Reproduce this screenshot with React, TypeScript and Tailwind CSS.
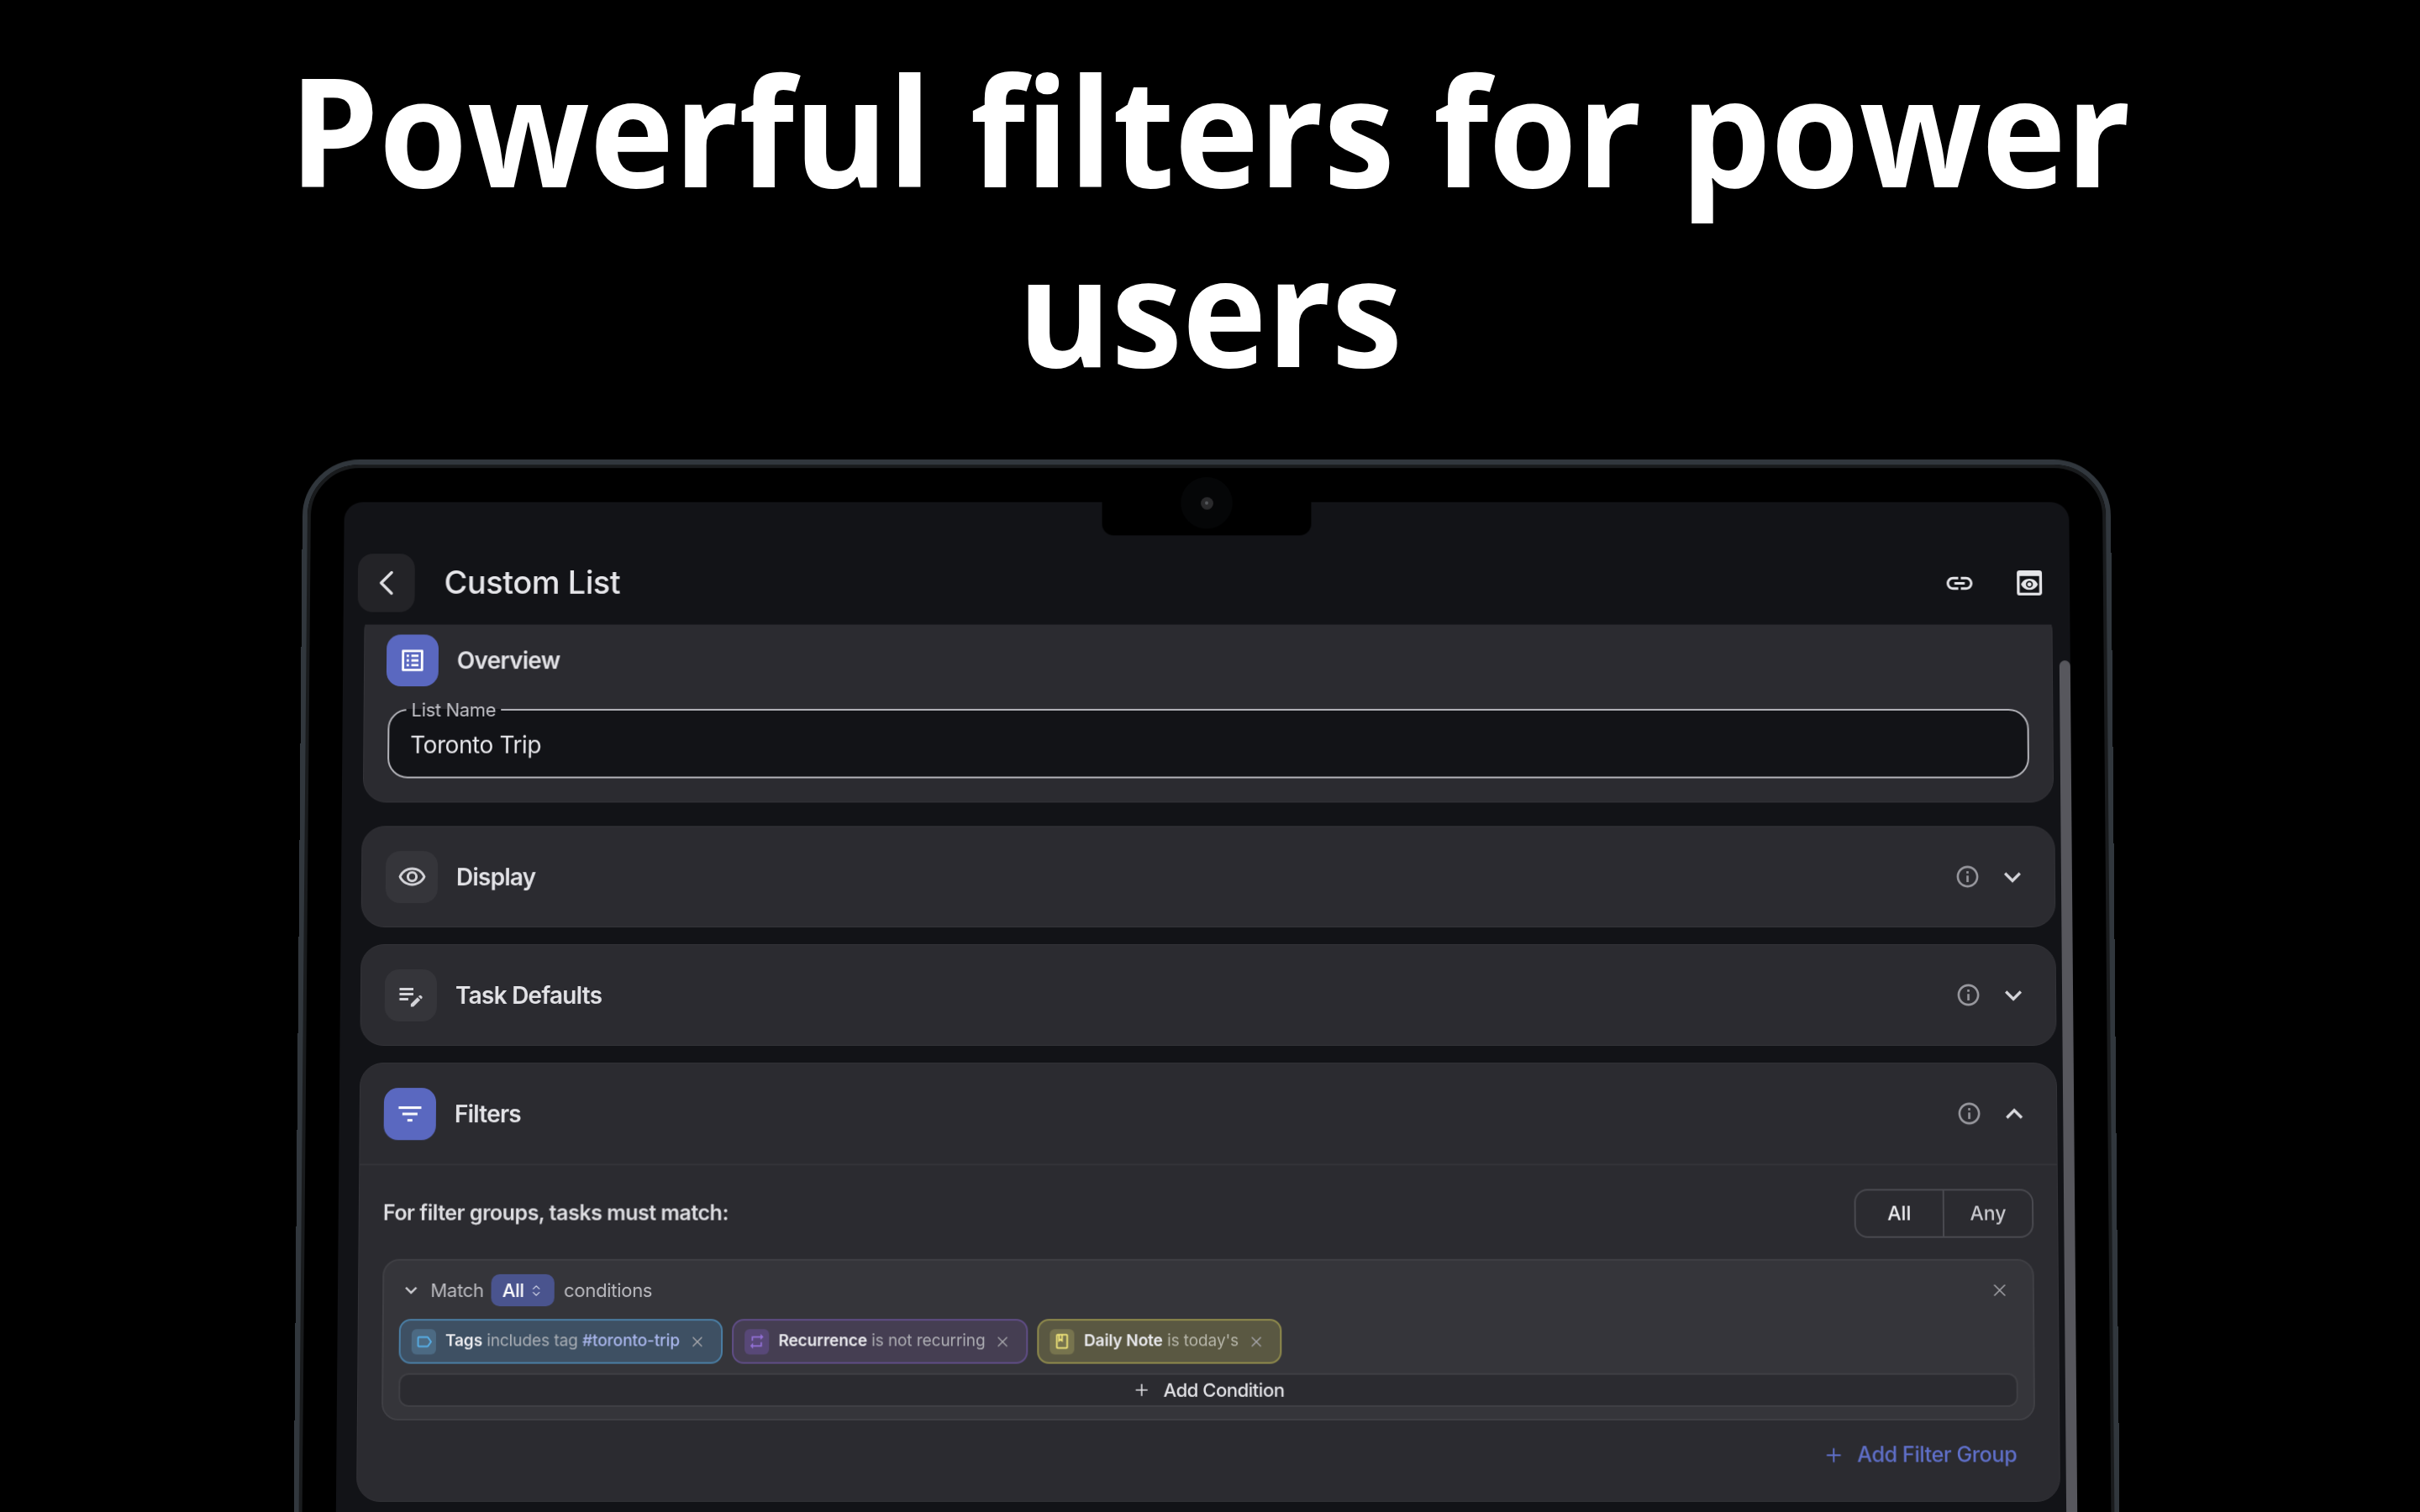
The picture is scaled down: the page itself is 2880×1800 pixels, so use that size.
import { ChevronLeft, ChevronsUpDown, Plus, X } from "lucide-react";
import {
  MdExpandLess,
  MdExpandMore,
  MdFilterList,
  MdLink,
  MdOutlineBook,
  MdOutlineEditNote,
  MdOutlineInfo,
  MdOutlineLabel,
  MdOutlineListAlt,
  MdOutlineRemoveRedEye,
  MdPreview,
  MdRepeat,
} from "react-icons/md";

function SectionHeader({
  icon,
  title,
  active,
  open,
}: {
  icon: React.ReactNode;
  title: string;
  active?: boolean;
  open?: boolean;
}) {
  return (
    <div className="flex h-[119px] items-center pl-[28px] pr-[30px]">
      <div
        className={
          active
            ? "flex h-[62px] w-[62px] items-center justify-center rounded-[17px] bg-[#5a68c0] text-white"
            : "flex h-[62px] w-[62px] items-center justify-center rounded-[17px] bg-[#35353a] text-[#d4d4d9]"
        }
      >
        {icon}
      </div>
      <span className="ml-[22px] text-[28px] font-semibold tracking-[-0.75px] text-[#e2e2e6]">{title}</span>
      <div className="ml-auto flex items-center gap-[18px]">
        <MdOutlineInfo size={31} className="text-[#98989e]" />
        {open ? (
          <MdExpandLess size={40} className="text-[#dcdce0]" />
        ) : (
          <MdExpandMore size={40} className="text-[#d4d4d9]" />
        )}
      </div>
    </div>
  );
}

function Chip({
  chipClass,
  tileClass,
  icon,
  children,
}: {
  chipClass: string;
  tileClass: string;
  icon: React.ReactNode;
  children: React.ReactNode;
}) {
  return (
    <div className={"flex h-[53px] items-center rounded-[14px] border-2 pl-[13px] pr-[18px] " + chipClass}>
      <div className={"flex h-[30px] w-[29px] items-center justify-center rounded-[6px] " + tileClass}>{icon}</div>
      <span className="ml-[11px] whitespace-nowrap text-[19px] tracking-[-0.1px]">{children}</span>
      <X size={20} strokeWidth={1.6} className="ml-[11px] text-[#a5a5aa]" />
    </div>
  );
}

export default function App() {
  return (
    <div className="flex h-[1800px] w-full flex-col items-center overflow-hidden bg-black font-[Inter,sans-serif]">
      <h1 className="w-full scale-x-[0.944] pt-[47px] text-center font-['Open_Sans',sans-serif] text-[180px] font-bold leading-[214px] text-white [word-spacing:2px]">
        Powerful filters for power
        <br />
        users
      </h1>

      <div className="relative mt-[69px] h-[1400px] w-[2162px] shrink-0 origin-[50%_631px] rounded-[68px] border-[6px] border-[#31373d] bg-black [transform:translateX(-4px)_perspective(2000px)_rotateX(0.92deg)]">
        <div className="h-full w-full rounded-[62px] border-[4px] border-[#191b1d] px-[40px] pt-[41px]">
          <div className="relative flex h-[1400px] w-full flex-col rounded-t-[22px] bg-[#121317]">
            {/* camera notch */}
            <div className="absolute left-1/2 top-0 flex h-[40px] w-[250px] -translate-x-1/2 justify-center rounded-b-[14px] bg-black">
              <div className="-mt-[30px] flex h-[62px] w-[62px] items-center justify-center rounded-full bg-[#050607]">
                <div className="flex h-[15px] w-[15px] items-center justify-center rounded-full bg-[#2a2a2c]">
                  <div className="h-[4px] w-[4px] rounded-full bg-[#55585c]" />
                </div>
              </div>
            </div>

            {/* header */}
            <div className="flex h-[147px] shrink-0 items-end pb-[15px] pl-[17px] pr-[28px]">
              <div className="flex h-[70px] w-[68px] items-center justify-center rounded-[18px] bg-[#232327] text-[#e0e0e4]">
                <ChevronLeft size={50} strokeWidth={1.6} />
              </div>
              <span className="mb-[14px] ml-[35px] text-[38px] font-medium leading-[44px] tracking-[-0.4px] text-[#e6e6ea]">
                Custom List
              </span>
              <div className="mb-[15px] ml-auto flex items-center gap-[45px] text-[#e6e6ea]">
                <MdLink size={37} />
                <MdPreview size={40} />
              </div>
            </div>

            {/* scrolling content */}
            <div className="relative flex-1 overflow-hidden">
              <div className="absolute right-0 top-[43px] h-[1300px] w-[13px] rounded-t-full bg-[#57575d]" />

              <div className="flex flex-col pl-[24px] pr-[20px]">
                {/* overview */}
                <div className="-mt-[20px] ml-[1px] mr-[1px] rounded-[28px] border border-[#333338] bg-[#2b2b30] px-[28px] pb-[28px] pt-[31px]">
                  <div className="flex items-center">
                    <div className="-ml-[2px] flex h-[62px] w-[62px] items-center justify-center rounded-[17px] bg-[#5a68c0] text-white">
                      <MdOutlineListAlt size={34} />
                    </div>
                    <span className="ml-[22px] text-[28px] font-semibold tracking-[-0.75px] text-[#e2e2e6]">Overview</span>
                  </div>
                  <fieldset className="mt-[17px] h-[93px] rounded-[24px] border-2 border-[#b4b4ba] bg-[#121317] px-[20px]">
                    <legend className="px-[6px] text-[22px] leading-[22px] tracking-[-0.3px] text-[#c2c2c8]">List Name</legend>
                    <div className="mt-[13px] pl-[5px] text-[28px] leading-[36px] tracking-[-0.4px] text-[#e6e6ea]">Toronto Trip</div>
                  </fieldset>
                </div>

                {/* display */}
                <div className="mt-[28px] rounded-[28px] border border-[#333338] bg-[#2b2b30]">
                  <SectionHeader icon={<MdOutlineRemoveRedEye size={35} />} title="Display" />
                </div>

                {/* task defaults */}
                <div className="mt-[20px] rounded-[28px] border border-[#333338] bg-[#2b2b30]">
                  <SectionHeader icon={<MdOutlineEditNote size={36} />} title="Task Defaults" />
                </div>

                {/* filters */}
                <div className="mt-[20px] rounded-[28px] border border-[#333338] bg-[#2b2b30] pb-[35px]">
                  <SectionHeader icon={<MdFilterList size={36} />} title="Filters" active open />
                  <div className="border-t-2 border-[#333338] px-[28px] pt-[28px]">
                    <div className="flex items-center justify-between">
                      <span className="text-[25px] font-semibold tracking-[-0.5px] text-[#dcdce0]">For filter groups, tasks must match:</span>
                      <div className="flex h-[58px] w-[213px] overflow-hidden rounded-[16px] border-2 border-[#49494f] text-[23px]">
                        <div className="flex w-[105px] items-center justify-center border-r-2 border-[#49494f] font-medium text-[#f0f0f3]">
                          All
                        </div>
                        <div className="flex flex-1 items-center justify-center font-medium text-[#c8c8cd]">Any</div>
                      </div>
                    </div>

                    <div className="mt-[25px] rounded-[20px] border-2 border-[#3f3f44] bg-[#35353a] px-[18px] pb-[14px] pt-[16px]">
                      <div className="flex h-[38px] items-center text-[22px] tracking-[-0.3px] text-[#b9b9be]">
                        <MdExpandMore size={28} className="text-[#c8c8cd]" />
                        <span className="ml-[9px]">Match</span>
                        <div className="ml-[9px] flex h-[38px] w-[75px] items-center rounded-[10px] bg-[#4a548e] pl-[13px] font-medium text-white">
                          All
                          <ChevronsUpDown size={17} strokeWidth={1.8} className="ml-[6px] text-[#d0d3e6]" />
                        </div>
                        <span className="ml-[11px]">conditions</span>
                        <X size={24} strokeWidth={1.6} className="ml-auto mr-[9px] text-[#a0a0a5]" />
                      </div>

                      <div className="mt-[15px] flex gap-[11px]">
                        <Chip
                          chipClass="border-[#4a7da3] bg-[#3e5063]"
                          tileClass="bg-[#4c6a83] text-[#57aee6]"
                          icon={<MdOutlineLabel size={22} />}
                        >
                          <span className="font-semibold text-[#eaeaee]">Tags</span>{" "}
                          <span className="text-[#a9aeb5]">includes tag</span>{" "}
                          <span className="font-medium text-[#a9b6ec]">#toronto-trip</span>
                        </Chip>
                        <Chip
                          chipClass="border-[#5f4d85] bg-[#453e52]"
                          tileClass="bg-[#584878] text-[#9270d6]"
                          icon={<MdRepeat size={21} />}
                        >
                          <span className="font-semibold text-[#eaeaee]">Recurrence</span>{" "}
                          <span className="text-[#adadb3]">is not recurring</span>
                        </Chip>
                        <Chip
                          chipClass="border-[#8f8a4c] bg-[#5a5842]"
                          tileClass="bg-[#77744e] text-[#f4e87a]"
                          icon={<MdOutlineBook size={21} />}
                        >
                          <span className="font-semibold text-[#eaeaee]">Daily Note</span>{" "}
                          <span className="text-[#b6b5a8]">is today's</span>
                        </Chip>
                      </div>

                      <div className="mt-[11px] flex h-[40px] items-center justify-center rounded-[12px] border-2 border-[#3f3f44] bg-[#2b2b30] text-[22px] font-medium tracking-[-0.5px] text-[#e0e0e4]">
                        <Plus size={22} strokeWidth={1.8} />
                        <span className="ml-[15px]">Add Condition</span>
                      </div>
                    </div>

                    <div className="mt-[22px] flex items-center justify-end pr-[22px] text-[25px] font-medium tracking-[-0.4px] text-[#5f6fc8]">
                      <Plus size={26} strokeWidth={1.8} />
                      <span className="ml-[15px]">Add Filter Group</span>
                    </div>
                  </div>
                </div>
              </div>
            </div>
          </div>
        </div>
      </div>
    </div>
  );
}
